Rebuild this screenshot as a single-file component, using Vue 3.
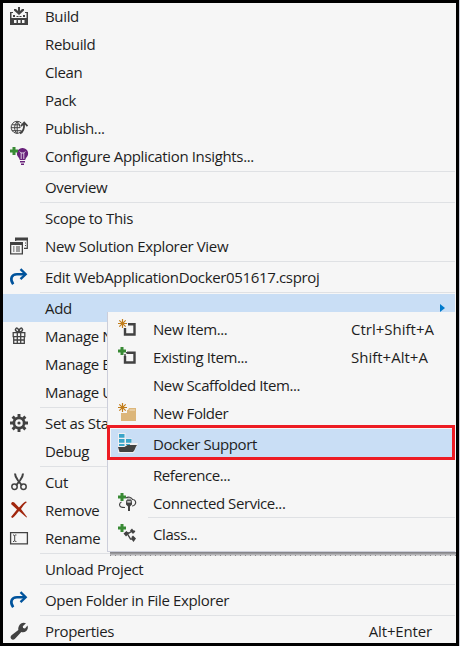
<script setup>
import { h } from 'vue'

const fg = '#424242'
const p = (d, fill = fg) => h('path', { d, fill })
const s = (d, stroke = fg, w = 1.5) => h('path', { d, fill: 'none', stroke, 'stroke-width': w })

const plus = () => p('M2.500 0h3v2.500H8v3H5.500V8h-3V5.500H0v-3h2.500z', '#388a34')
const star = () => s('M4.500 0v9M0 4.500h9M1.300 1.300l6.400 6.400M7.700 1.300L1.300 7.700', '#c27d1a', 1.2)
const arrow = () => [s('M3.200 16.200C-.5 11 1.500 6.200 7 6.200h8', '#00539c', 2.6), s('M10.500 1.200l5.200 5-5.200 5', '#00539c', 2.3)]

const icons = {
  build: () => [
    p('M8 0h2v4l2-2h2v1.500L9 8 4 3.500V2h2l2 2z'),
    p('M0 5h3v1H1.500v5h15V6H15V5h3v13H0z'),
    p('M3 8h2v2H3zM6.500 9h2v1h-2zM9.500 9h2v1h-2zM13 8h2v2h-2z'),
    p('M4 13h2.500v3H4zM8 13h2.500v3H8zM12 13h2.500v3H12z', '#f6f6f6'),
  ],
  publish: () => [
    s('M11.500 4.200A6 6 0 1 0 12.500 11M7 3C3.800 6 3.800 11.500 7 14.500M7.500 3c1.500 1.500 2.500 3.500 2.500 6M7.200 3v11.500M1 8.700h9M2 5.800h8M2 11.700h9', fg, 1),
    s('M10 14.500c3.500-2 4.500-5 4-10M11 7.200l3.200-3.700L17.500 7.200', fg, 1.8),
  ],
  insights: () => [
    p('M12.500 1a5.500 5.500 0 0 0-5 8c1 1.500 2 2.500 2.300 4h5.400c.3-1.500 1.300-2.500 2.300-4a5.500 5.500 0 0 0-5-8zM10 14h5v1.500h-5zM11 16.500h3V18h-3z', '#68217a'),
    s('M9.700 4.500l1.500 1.500v6M15.300 4.500l-1.500 1.500v6M11 6h3', '#e8dcec', 0.9),
    plus(),
  ],
  windows: () => [
    s('M5.700 4V1.700h11.600v9.600H14', fg, 1.2), p('M5 0.500h13v3H5z'),
    p('M0 5h13v12.500H0z'), p('M1.300 8h10.400v8.300H1.300z', '#f6f6f6'),
    s('M3 10h1.500M6 10h4M3 12h1.500M6 12h4M3 14h1.500M6 14h4M15 6h1M15 8.500h1', fg, 1),
  ],
  arrow,
  gift: () => [
    s('M9 5C6 5 4.500 3 6 1.500S9 3 9 5c0-2 1.500-5 3-3.500S12 5 9 5', fg, 1.5),
    s('M3.200 5.700h11.600v4H3.200zM3.700 9.700h10.600v6.600H3.700zM7.300 5.500v11M10.700 5.500v11M3.700 13h10.600', fg, 1.3),
  ],
  gear: () => [
    h('circle', { cx: 9, cy: 9, r: 5.1, fill: 'none', stroke: fg, 'stroke-width': 2.7 }),
    s('M9 0v4M9 14v4M0 9h4M14 9h4M2.600 2.600l2.800 2.800M12.600 12.600l2.800 2.800M15.400 2.600l-2.800 2.800M5.400 12.600l-2.800 2.800', fg, 2.9),
    h('circle', { cx: 9, cy: 9, r: 1.6, fill: fg }),
  ],
  cut: () => [
    s('M5 0.500c0 3 1.500 5 3 7l4 5M13 0.500c0 3-1.500 5-3 7l-4 5', fg, 2),
    h('circle', { cx: 4.5, cy: 13.7, r: 2.7, fill: 'none', stroke: fg, 'stroke-width': 1.5 }),
    h('circle', { cx: 13.5, cy: 13.7, r: 2.7, fill: 'none', stroke: fg, 'stroke-width': 1.5 }),
  ],
  remove: () => [p('M2 1l2 .3 5 5.200C11 4.500 13 2 15.500.5L17 1c-2.500 2-4.500 4.500-6 7l6 8-.5.500-7.500-6.500C7 12.500 5 15 2.500 17L1 16c2-2.500 4-5 6-7.500L1 3z', '#a1260d')],
  rename: () => [s('M.6 3.600h16.800v11.300H.6z', fg, 1.3), s('M3 6h1l.7.700L5.400 6h1M3 12.500h1l.7-.7.700.7h1M4.700 6.500v5.500', fg, 1)],
  wrench: () => [p('M11 1.500c1.500-1 3.500-1 5-.3l-3.200 3 .3 1.700 1.900.5L17.500 3.500c.8 2 .3 4.200-1.200 5.500-1.500 1.300-3.300 1.500-5 1L5 16.800c-1.200 1.200-2.700 1.200-3.700.200s-1-2.500.2-3.700L8.300 8C7.800 5.500 9 3 11 1.500z')],
  newItem: () => [s('M10 5.200h6.500v10.300H7V9', fg, 2.4), star()],
  existing: () => [s('M9 5.700h7.500v9.800H7V9', fg, 2.4), s('M7 9.500V7M8 5.700h3', fg, 1.4), plus()],
  folder: () => [p('M3 10h6V7h1l1-2h7v13H3z', '#dcb67a'), s('M11.500 7h5.500', '#f3e2c6', 1), star()],
  docker: () => [
    h('path', { d: 'M0 -1h7.500v5.500h6.500V9h6l-3 7-1 3H0z', fill: '#f0eff1' }),
    p('M1 0h5.500v3.700H1zM1 5h5.500v3.700H1zM8 5h5.500v3.700H8zM1 10h5.500v2H1zM8 10h4v1H8z', '#3ba5c9'),
    p('M0 13h6.500l3-2H19c-2 2-1.500 5-4 7H1.500z'),
  ],
  service: () => [
    s('M3.500 9c-2.500 1-2.500 4-.5 5 1 .5 2.500.5 4 .5M8 5c2-1.500 5.500-1 6.500 1.500 3 0 4 3 2.500 5-.8 1.200-2 1.500-3 1.500', fg, 1.2),
    s('M8.700 10V7.700h4.600V10M10 5.500V8M12 5.500V8', fg, 1.1),
    p('M8 9.500h6v2l-2 2V18h-2v-4.500l-2-2z'), plus(),
  ],
  class: () => [
    s('M7 9h4l2.500-1.500H17M9.500 10l3 5h4', fg, 1.4),
    p('M5.500 9.500l3-2.500 2.500 2.500-3 3zM12 6.500l2-2 1.500 2 2 .5-2.500 3zM13.500 13l1.500-1.500 3 3-2.500 3.500-1.500-2z'), plus(),
  ],
}

const Icon = ({ name }) => h('svg', { viewBox: '0 0 18 18', width: 18, height: 18 }, icons[name]())
Icon.props = ['name']

const menu = [
  [
    { label: 'Build', icon: 'build' }, { label: 'Rebuild' }, { label: 'Clean' }, { label: 'Pack' },
    { label: 'Publish...', icon: 'publish' }, { label: 'Configure Application Insights...', icon: 'insights' },
  ],
  [{ label: 'Overview' }],
  [{ label: 'Scope to This' }, { label: 'New Solution Explorer View', icon: 'windows' }],
  [{ label: 'Edit WebApplicationDocker051617.csproj', icon: 'arrow' }],
  [{ label: 'Add', open: true }, { label: 'Manage N', icon: 'gift' }, { label: 'Manage B' }, { label: 'Manage U' }],
  [{ label: 'Set as Sta', icon: 'gear' }, { label: 'Debug' }],
  [{ label: 'Cut', icon: 'cut' }, { label: 'Remove', icon: 'remove' }, { label: 'Rename', icon: 'rename' }],
  [{ label: 'Unload Project' }],
  [{ label: 'Open Folder in File Explorer', icon: 'arrow' }],
  [{ label: 'Properties', icon: 'wrench', keys: 'Alt+Enter' }],
]
const submenu = [
  [
    { label: 'New Item...', icon: 'newItem', keys: 'Ctrl+Shift+A' },
    { label: 'Existing Item...', icon: 'existing', keys: 'Shift+Alt+A' },
    { label: 'New Scaffolded Item...' },
    { label: 'New Folder', icon: 'folder' },
  ],
  [{ label: 'Docker Support', icon: 'docker', marked: true }],
  [{ label: 'Reference...' }, { label: 'Connected Service...', icon: 'service' }],
  [{ label: 'Class...', icon: 'class' }],
]
</script>

<template>
  <div class="frame">
    <div class="menu">
      <div v-for="(group, g) in menu" :key="g" class="group">
        <div v-for="item in group" :key="item.label" class="row" :class="{ open: item.open }">
          <span class="icon"><Icon v-if="item.icon" :name="item.icon" /></span>
          <span class="label">{{ item.label }}</span>
          <span v-if="item.keys" class="keys">{{ item.keys }}</span>
          <span v-if="item.open" class="caret"></span>
        </div>
      </div>
    </div>
    <div class="submenu">
      <div v-for="(group, g) in submenu" :key="g" class="group">
        <div v-for="item in group" :key="item.label" class="row" :class="{ marked: item.marked }">
          <span class="icon"><Icon v-if="item.icon" :name="item.icon" /></span>
          <span class="label">{{ item.label }}</span>
          <span v-if="item.keys" class="keys">{{ item.keys }}</span>
        </div>
      </div>
    </div>
  </div>
</template>

<style>
body { background: #ccceda; }
</style>

<style scoped>
.frame {
  position: relative;
  box-sizing: border-box;
  width: 459px;
  height: 646px;
  border: 3px solid #000;
  background: #f6f6f6;
  overflow: hidden;
  font: 15px/28px "Open Sans", "Noto Sans", sans-serif;
  letter-spacing: -0.35px;
  color: #1e1e1e;
}
.menu { margin-top: -1px; padding-right: 1px; }
.group + .group { padding-top: 3px; position: relative; }
.group + .group::before {
  content: "";
  position: absolute;
  top: 1px;
  left: 37px;
  right: 0;
  height: 1px;
  background: #dfe1e4;
}
.row { display: flex; height: 28px; white-space: nowrap; }
.icon { flex: none; width: 42px; padding: 5px 0 0 7px; box-sizing: border-box; line-height: 0; }
.icon svg { overflow: visible; }
.label { flex: 1; }
.keys { padding-right: 23px; letter-spacing: -0.15px; }
.open { background: #c9def5; }
.caret {
  width: 0;
  height: 0;
  margin: 10px 10px 0 0;
  border: 4.5px solid transparent;
  border-left: 5px solid #007acc;
  border-right: 0;
}
.submenu {
  position: absolute;
  box-sizing: border-box;
  left: 104px;
  top: 309px;
  width: 348px;
  height: 240px;
  padding: 2px 0;
  border: solid #ccceda;
  border-width: 0 0 1px 1px;
  background: #f6f6f6;
  letter-spacing: -0.42px;
}
/* Drop shadow below the submenu, ending in a dotted edge */
.submenu::after {
  content: "";
  position: absolute;
  top: 100%;
  left: 2px;
  right: -1px;
  height: 4px;
  margin-top: 1px;
  background:
    repeating-linear-gradient(90deg, #8a8a8c 0 1px, #d4d4d6 1px 5px) 0 3px / 100% 1px no-repeat,
    linear-gradient(#87878b 0 1px, #98989c 1px 2px, #b4b4b8 2px 3px, transparent 3px);
}
.submenu .group + .group::before { left: 40px; }
.submenu .icon { width: 45px; padding-left: 10px; }
.submenu .label, .submenu .keys { padding-top: 1px; }
.submenu .keys { width: 82px; padding-right: 22px; letter-spacing: 0; }
.marked {
  position: relative;
  z-index: 1;
  background: linear-gradient(#c9def5, #c9def5) 3px 0 / 341px 28px no-repeat;
}
.marked::after {
  content: "";
  position: absolute;
  inset: -4px 0 -3px -1px;
  border: 3px solid #ed1c24;
}
</style>
